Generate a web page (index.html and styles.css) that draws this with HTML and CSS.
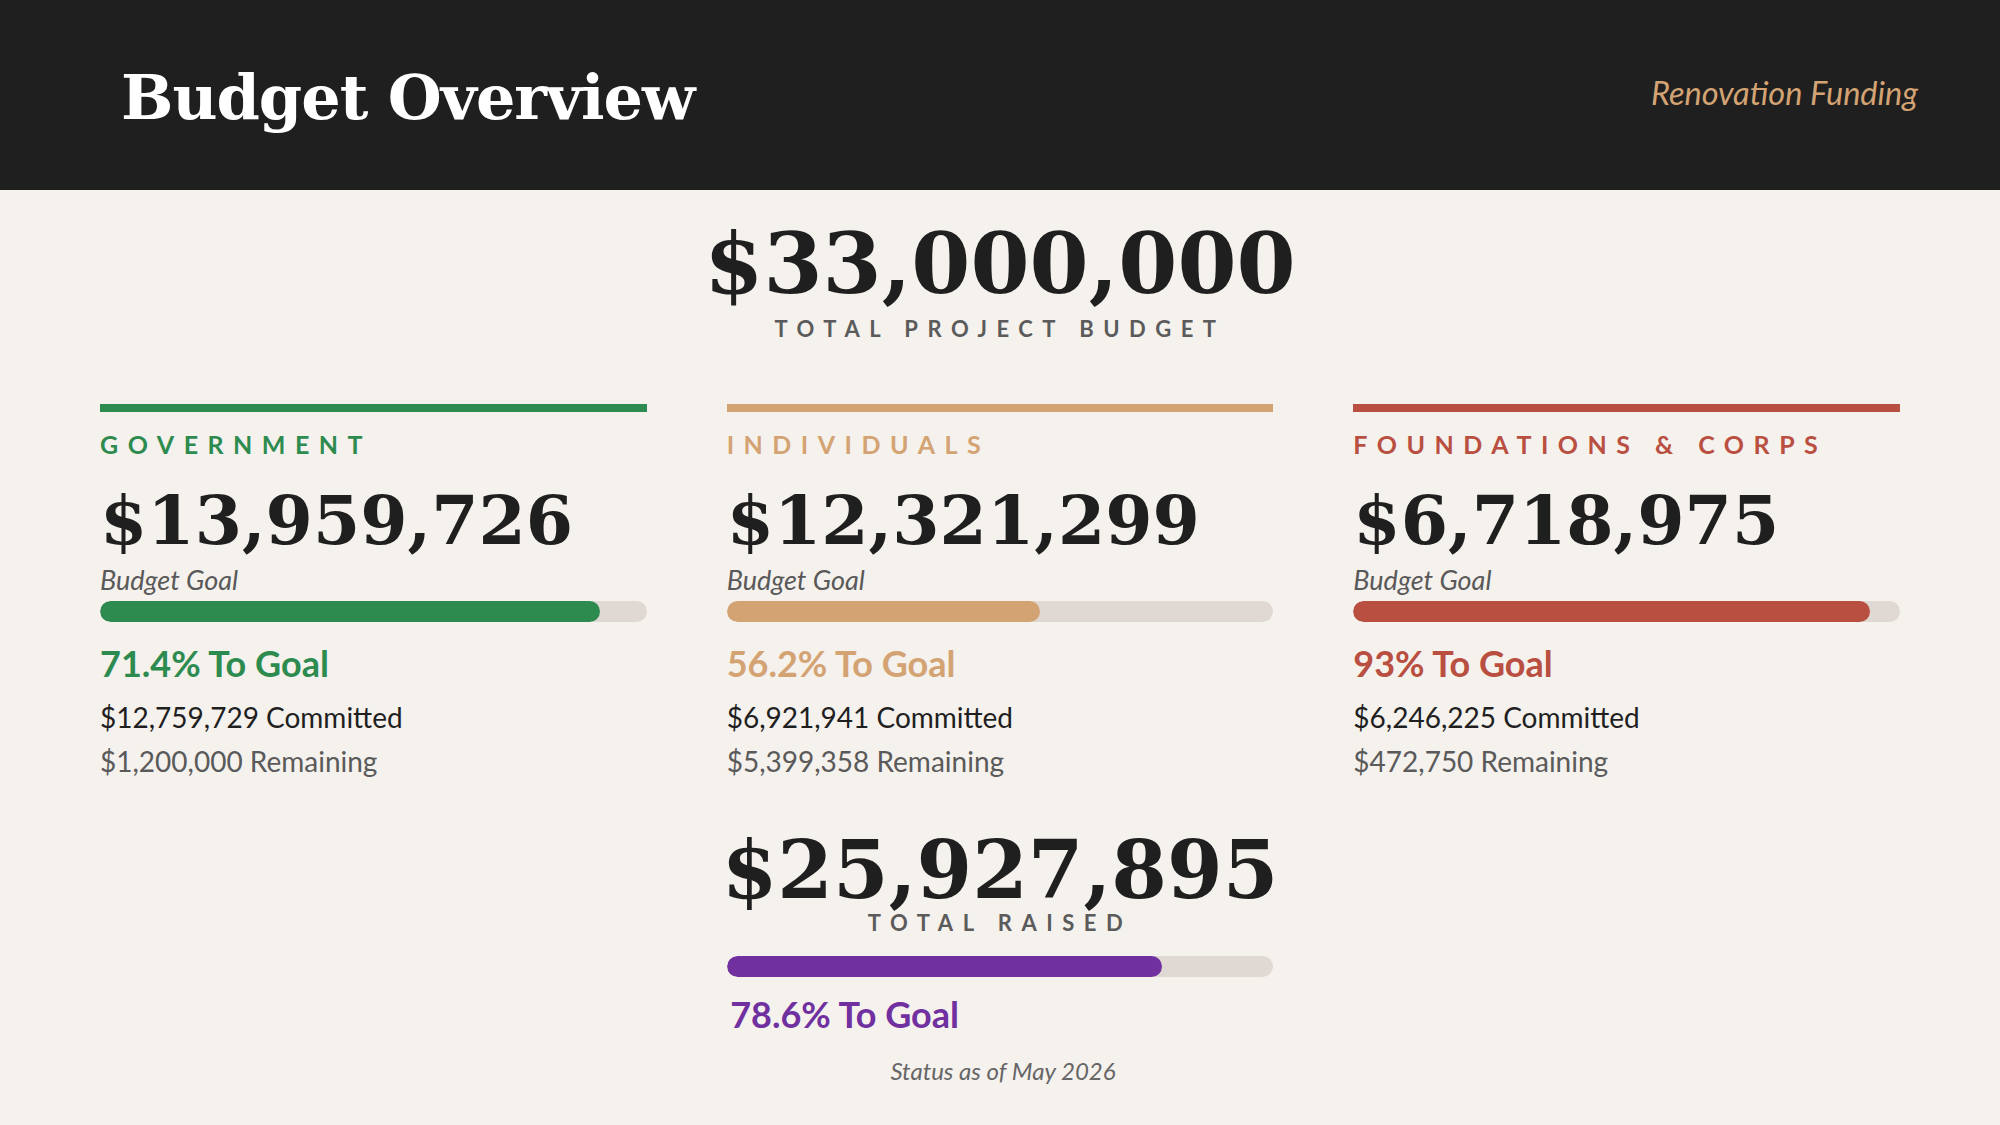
FILE: index.html
```html
<!DOCTYPE html>
<html lang="en">
<head>
<meta charset="utf-8">
<title>Budget Overview</title>
<link rel="stylesheet" href="styles.css">
</head>
<body>
<header class="top">
  <h1 class="title">Budget Overview</h1>
  <div class="subtitle">Renovation Funding</div>
</header>
<main class="main">
  <section class="hero">
    <div class="hero-amount">$33,000,000</div>
    <div class="caption">TOTAL PROJECT BUDGET</div>
  </section>
  <section class="grid">
    <div class="card gov">
      <div class="rule"></div>
      <div class="label">GOVERNMENT</div>
      <div class="amount">$13,959,726</div>
      <div class="goal-label">Budget Goal</div>
      <div class="track"><div class="fill" style="width:91.4%"></div></div>
      <div class="pct">71.4% To Goal</div>
      <div class="committed">$12,759,729 Committed</div>
      <div class="remaining">$1,200,000 Remaining</div>
    </div>
    <div class="card ind">
      <div class="rule"></div>
      <div class="label">INDIVIDUALS</div>
      <div class="amount">$12,321,299</div>
      <div class="goal-label">Budget Goal</div>
      <div class="track"><div class="fill" style="width:57.4%"></div></div>
      <div class="pct">56.2% To Goal</div>
      <div class="committed">$6,921,941 Committed</div>
      <div class="remaining">$5,399,358 Remaining</div>
    </div>
    <div class="card fdn">
      <div class="rule"></div>
      <div class="label">FOUNDATIONS &amp; CORPS</div>
      <div class="amount">$6,718,975</div>
      <div class="goal-label">Budget Goal</div>
      <div class="track"><div class="fill" style="width:94.5%"></div></div>
      <div class="pct">93% To Goal</div>
      <div class="committed">$6,246,225 Committed</div>
      <div class="remaining">$472,750 Remaining</div>
    </div>
    <div class="total raised">
      <div class="total-amount">$25,927,895</div>
      <div class="caption">TOTAL RAISED</div>
      <div class="track total-track"><div class="fill" style="width:79.7%"></div></div>
      <div class="pct total-pct">78.6% To Goal</div>
      <div class="status">Status as of May 2026</div>
    </div>
  </section>
</main>
</body>
</html>
```

FILE: styles.css
```css
* { box-sizing: border-box; }

html, body {
  margin: 0;
  padding: 0;
}

body {
  width: 2000px;
  height: 1125px;
  overflow: hidden;
  background: #f5f1ed;
  color: #1f1f1f;
  font-family: "Lato", "Open Sans", sans-serif;
}

.top {
  height: 190px;
  background: #1f1f1f;
  display: flex;
  justify-content: space-between;
  align-items: flex-start;
  padding: 0 82px 0 121px;
}

.title {
  margin: 67px 0 0;
  font-family: "DejaVu Serif", "Liberation Serif", serif;
  font-weight: 700;
  font-size: 62px;
  line-height: 1;
  letter-spacing: -1px;
  color: #ffffff;
}

.subtitle {
  margin-top: 77px;
  font-style: italic;
  font-size: 32.5px;
  line-height: 1;
  color: #d4a373;
}

.main {
  padding: 0 100px;
}

.hero {
  display: flex;
  flex-direction: column;
  align-items: center;
}

.hero-amount {
  margin-top: 31px;
  font-family: "DejaVu Serif", "Liberation Serif", serif;
  font-weight: 700;
  font-size: 85px;
  line-height: 1;
}

.caption {
  font-weight: 700;
  font-size: 22px;
  line-height: 1;
  letter-spacing: 9.5px;
  color: #5b5b5b;
  text-align: center;
}

.hero .caption {
  margin-top: 12px;
}

.grid {
  margin-top: 64px;
  display: grid;
  grid-template-columns: repeat(3, minmax(0, 1fr));
  column-gap: 80px;
}

.card {
  display: flex;
  flex-direction: column;
  min-width: 0;
}

.gov { --accent: #2e8b50; }
.ind { --accent: #d4a373; }
.fdn { --accent: #b94f41; }
.raised { --accent: #7030a0; }

.rule {
  height: 8px;
  background: var(--accent);
}

.label {
  margin-top: 20px;
  font-weight: 700;
  font-size: 25px;
  line-height: 1;
  letter-spacing: 9.5px;
  color: var(--accent);
  white-space: nowrap;
}

.amount {
  margin-top: 29px;
  font-family: "DejaVu Serif", "Liberation Serif", serif;
  font-weight: 700;
  font-size: 68px;
  line-height: 1;
  white-space: nowrap;
}

.goal-label {
  margin-top: 12px;
  font-style: italic;
  font-size: 27px;
  line-height: 1;
  color: #595959;
}

.track {
  margin-top: 8px;
  height: 21px;
  border-radius: 11px;
  background: #e0d9d3;
  overflow: hidden;
}

.fill {
  height: 100%;
  border-radius: 11px;
  background: var(--accent);
}

.pct {
  margin-top: 23px;
  font-weight: 700;
  font-size: 36px;
  line-height: 1;
  color: var(--accent);
}

.committed {
  margin-top: 22px;
  font-size: 28px;
  line-height: 1;
  color: #1f1f1f;
}

.remaining {
  margin-top: 16px;
  font-size: 28px;
  line-height: 1;
  color: #5a5a5a;
}

.total {
  grid-column: 2;
  display: flex;
  flex-direction: column;
  min-width: 0;
  margin-top: 55px;
}

.total-amount {
  display: flex;
  justify-content: center;
  font-family: "DejaVu Serif", "Liberation Serif", serif;
  font-weight: 700;
  font-size: 80px;
  line-height: 1;
  white-space: nowrap;
}

.total .caption {
  margin-top: 2px;
}

.total-track {
  margin-top: 22px;
}

.total-pct {
  margin-top: 19px;
  padding-left: 3.5px;
}

.status {
  margin-top: 27px;
  padding-left: 6px;
  font-style: italic;
  font-size: 24px;
  line-height: 1;
  color: #666666;
  text-align: center;
}
```
